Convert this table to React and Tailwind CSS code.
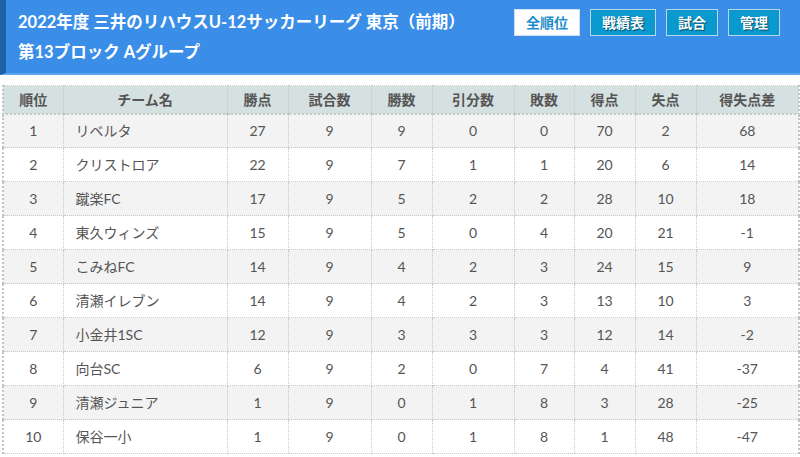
import React from 'react'

const rows = [
    [1, 'リベルタ', 27, 9, 9, 0, 0, 70, 2, 68],
    [2, 'クリストロア', 22, 9, 7, 1, 1, 20, 6, 14],
    [3, '蹴楽FC', 17, 9, 5, 2, 2, 28, 10, 18],
    [4, '東久ウィンズ', 15, 9, 5, 0, 4, 20, 21, -1],
    [5, 'こみねFC', 14, 9, 4, 2, 3, 24, 15, 9],
    [6, '清瀬イレブン', 14, 9, 4, 2, 3, 13, 10, 3],
    [7, '小金井1SC', 12, 9, 3, 3, 3, 12, 14, -2],
    [8, '向台SC', 6, 9, 2, 0, 7, 4, 41, -37],
    [9, '清瀬ジュニア', 1, 9, 0, 1, 8, 3, 28, -25],
    [10, '保谷一小', 1, 9, 0, 1, 8, 1, 48, -47],
]

const headers = ['順位', 'チーム名', '勝点', '試合数', '勝数', '引分数', '敗数', '得点', '失点', '得失点差']
const widths = ['w-[60px]', 'w-[164px]', 'w-[61px]', 'w-[83px]', 'w-[61px]', 'w-[82px]', 'w-[60px]', 'w-[61px]', 'w-[61px]', 'w-[103px]']

const font = { fontFamily: 'Lato, "Noto Sans CJK JP", sans-serif' }

export default function App() {
    return (
        <div className="w-[800px] h-[457px] bg-white overflow-hidden" style={font}>
            <div className="flex justify-between h-[75px] bg-[#3a8ee8] border-l-[6px] border-[#1f5fa6] border-b-2 border-b-[#5aa6f0] pl-3 pr-5 pt-[7px]">
                <h1 className="text-white font-bold text-[16.5px] leading-[30px]">
                    <span className="block">2022年度 三井のリハウスU-12サッカーリーグ 東京（前期）</span>
                    <span className="block">第13ブロック Aグループ</span>
                </h1>
                <div className="flex gap-[10px] mt-[2px] h-[27px]">
                    <button className="px-[11px] bg-white border border-[#cfdff0] text-[#1f8ccb] font-bold text-[14px] leading-[25px]">全順位</button>
                    <button className="px-[11px] bg-[#0a99cf] border border-[#b9d6ef] text-white font-bold text-[14px] leading-[25px] [text-shadow:1px_1px_1px_rgba(0,0,0,0.5)]">戦績表</button>
                    <button className="px-[11px] bg-[#0a99cf] border border-[#b9d6ef] text-white font-bold text-[14px] leading-[25px] [text-shadow:1px_1px_1px_rgba(0,0,0,0.5)]">試合</button>
                    <button className="px-[11px] bg-[#0a99cf] border border-[#b9d6ef] text-white font-bold text-[14px] leading-[25px] [text-shadow:1px_1px_1px_rgba(0,0,0,0.5)]">管理</button>
                </div>
            </div>
            <div className="px-[2px] pt-[10px]">
                <table className="table-fixed border-collapse w-[796px] text-[14px] text-[#555]">
                    <colgroup>
                        {widths.map((w, i) => (
                            <col key={i} className={w} />
                        ))}
                    </colgroup>
                    <thead>
                        <tr className="h-[28px] bg-[#d5e0e0]">
                            {headers.map((h, i) => (
                                <th
                                    key={i}
                                    className="font-bold text-center border-t border-t-[#ccc] border-b-2 border-b-[#c3c8c8] border-x border-dotted border-x-[#c8c8c8] first:border-l-2 first:border-l-[#c4c4c4] last:border-r-2 last:border-r-[#c4c4c4]"
                                >
                                    {h}
                                </th>
                            ))}
                        </tr>
                    </thead>
                    <tbody>
                        {rows.map((r, ri) => (
                            <tr key={ri} className={'h-[34px] ' + (ri % 2 === 0 ? 'bg-[#f3f3f3]' : 'bg-white')}>
                                {r.map((c, ci) => (
                                    <td
                                        key={ci}
                                        className={
                                            (ci === 1 ? 'text-left pl-3 ' : 'text-center ') +
                                            'border border-dotted border-[#c8c8c8] first:border-l-2 first:border-l-[#c4c4c4] last:border-r-2 last:border-r-[#c4c4c4]'
                                        }
                                    >
                                        {c}
                                    </td>
                                ))}
                            </tr>
                        ))}
                    </tbody>
                </table>
            </div>
        </div>
    )
}
